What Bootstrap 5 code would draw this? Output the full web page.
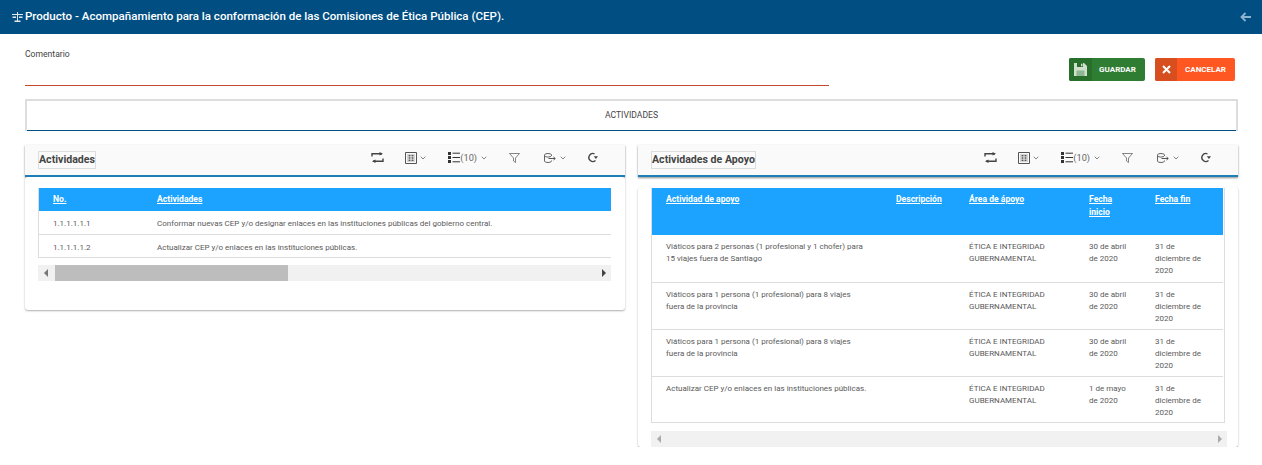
<!DOCTYPE html>
<html lang="en">
<head>
  <meta charset="UTF-8">
  <title>Producto</title>
  <link href="https://cdn.jsdelivr.net/npm/bootstrap@5.3.0/dist/css/bootstrap.min.css" rel="stylesheet">
  <style>
    body { font-family: Roboto, "Liberation Sans", sans-serif; background: #fff; color: #555; overflow: hidden; }
    .top-bar { height: 34px; background: #004e82; padding: 0 11px 0 12px; }
    .top-title { font-size: 11.55px; font-weight: 500; color: #fff; gap: 2px; }
    .page-body { padding: 0 24px 0 25px; }
    .comment-row { height: 65px; }
    .comment-box { width: 804px; height: 52px; border-bottom: 1px solid #c5492d; padding-top: 14px; font-size: 8.6px; line-height: 12px; color: #444; margin-bottom: 13px; }
    .action-btn { height: 23px; border: 0; padding: 0; font-size: 8px; font-weight: 700; color: #fff; border-radius: 2px; overflow: hidden; }
    .action-btn .ico { width: 23px; height: 23px; }
    .btn-save { width: 76px; background: #2e7d32; margin-right: 10px; }
    .btn-save .ico { background: #296f2c; }
    .btn-save .txt { padding-right: 2px; }
    .btn-cancel { width: 80px; background: #ff5722; margin-right: 3px; }
    .btn-cancel .ico { background: #d84f1f; width: 22px; }
    .btn-cancel .txt { padding-right: 1px; }
    .tab-box { height: 32px; border: 2px solid #ddd; border-bottom: 0; box-shadow: inset 0 -1px 0 #004e82; font-size: 8.6px; color: #444; margin-bottom: 14px; padding-bottom: 2px; }
    .panes { gap: 13px; }
    .pane { width: 600px; }
    .pane-head { height: 32px; background: #fafafa; border: 0; border-bottom: 2px solid #1f7fb8; border-radius: 0; box-shadow: 0 1px 2px rgba(0,0,0,.45); padding: 0 27px 0 13px; }
    .pane-title { border: 1px solid #ddd; font-size: 10.6px; font-weight: 700; color: #444; line-height: 16px; padding: 0; height: 18px; }
    .tools { color: #666; font-size: 9.2px; margin-top: -4px; }
    .tools .gap-s { margin-right: 21px; }
    .tools .gap-r { margin-right: 22px; }
    .tools .gap-f { margin-right: 24px; }
    .pane-body { border: 0; border-radius: 3px; box-shadow: 0 1px 2px rgba(0,0,0,.32); }
    .left-body { height: 133px; padding: 11px 14px 0 13px; }
    .right-body { margin-top: 10px; height: 260px; padding: 1px 13px 0 13px; }
    .tbl-wrap { overflow: hidden; border: 1px solid #ddd; border-top: 0; border-right: 0; }
    .left-wrap { height: 70px; }
    .right-wrap { height: 236px; border-right: 1px solid #ddd; }
    .grid-tbl { table-layout: fixed; margin: 0; font-size: 8px; line-height: 12px; color: #5a5a5a; }
    .grid-tbl th { background: #1ca3ff; color: #fff; font-size: 8.6px; font-weight: 700; text-decoration: underline; padding: 5px 8px 0 14px; line-height: 13px; border: 0; vertical-align: top; }
    .grid-tbl td { padding: 6px 8px 0 14px; border-bottom: 1px solid #ddd; vertical-align: top; color: #5a5a5a; }
    .left-wrap .grid-tbl { width: 573px; }
    .left-wrap tr { height: 23px; }
    .left-wrap td { padding-top: 7px; }
    .right-wrap .grid-tbl { width: 571px; }
    .right-wrap tr { height: 47px; }
    .right-wrap td:first-child, .right-wrap th:first-child { padding-right: 15px; }
    .fake-scroll { height: 16px; background: #f1f1f1; }
    .left-scroll { margin-top: 7px; }
    .right-scroll { margin-top: 8px; margin-right: -2px; }
    .thumb { width: 233px; height: 16px; background: #bdbdbd; margin: 0 auto 0 7px; }
    .arr-l { width: 0; height: 0; border: 4px solid transparent; border-left: 0; border-right: 4px solid #777; margin-left: 6px; }
    .arr-r { width: 0; height: 0; border: 4px solid transparent; border-right: 0; border-left: 4px solid #444; margin-right: 5px; }
    .arr-l.dim { border-right-color: #aaa; }
    .arr-r.dim { border-left-color: #aaa; margin-left: auto; }
    .chev { margin-left: 4px; }
    .chev-near { margin-left: 3px; }
  </style>
</head>
<body>
  <svg width="0" height="0" class="d-block position-absolute">
    <defs>
      <symbol id="i-swap" viewBox="0 0 13 11"><path d="M1 4.500V1.800h10M12 6.500v2.700H2" fill="none" stroke="#444" stroke-width="1.400"/><path d="M8.500 0 12 1.800 8.500 3.600zM4.500 7.400 1 9.200 4.500 11z" fill="#444"/></symbol>
      <symbol id="i-cols" viewBox="0 0 12 12"><path d="M.5.500h11v11H.5z" fill="none" stroke="#555"/><path d="M2.500 2.500h7v7h-7z" fill="none" stroke="#bbb" stroke-width=".6"/><path d="M3.500 3h2v1.500h-2zM3.500 5.300h2v1.500h-2zM3.500 7.600h2v1.500h-2zM6.500 3h2v1.500h-2zM6.500 5.300h2v1.500h-2zM6.500 7.600h2v1.500h-2z" fill="#555"/></symbol>
      <symbol id="i-list" viewBox="0 0 12 11"><path d="M0 0h3v3H0zM0 4h3v3H0zM0 8h3v3H0z" fill="#333"/><path d="M4.500 1.200h7.500M4.500 5.500h7.500M4.500 9.800h7.500" stroke="#333" fill="none"/></symbol>
      <symbol id="i-filter" viewBox="0 0 11 10"><path d="M.5.500h10L6.500 5v4.500l-2-1.500V5z" fill="none" stroke="#666" stroke-width=".8"/></symbol>
      <symbol id="i-export" viewBox="0 0 12 10"><path d="M7.500 3V2Q7.500.5 4 .5T.5 2v6q0 1.500 3.500 1.500T7.500 8V7.500M.5 3.500q3.500 1.200 6.500 0" fill="none" stroke="#555" stroke-width=".9"/><path d="M4.500 5.500h6.500M9.500 4l1.800 1.500L9.500 7" fill="none" stroke="#444" stroke-width=".9"/></symbol>
      <symbol id="i-reload" viewBox="0 0 11 11"><path d="M7.500 1.800A4 4 0 1 0 8.500 8.500" fill="none" stroke="#444" stroke-width="1.400"/><path d="M6.800 4.300H11L8.900 7z" fill="#444"/></symbol>
      <symbol id="i-chev" viewBox="0 0 6 4"><path d="M.7.700 3 3l2.300-2.300" fill="none" stroke="#777" stroke-width=".9"/></symbol>
    </defs>
  </svg>

  <nav class="navbar top-bar d-flex align-items-center justify-content-between flex-nowrap">
    <div class="d-flex align-items-center top-title">
      <svg width="11" height="10" viewBox="0 0 11 10"><path d="M5 0h1v9H5zM0 2h11v1H0zM.5 4.500h3.500V6H.5zM7 4.500h3.500V6H7zM2.500 8.500h6V10h-6z" fill="#dfe8ef"/></svg>
      <span>Producto - Acompañamiento para la conformación de las Comisiones de Ética Pública (CEP).</span>
    </div>
    <svg width="11" height="10" viewBox="0 0 11 10"><path d="M11 5H2M5.500 1 1.500 5l4 4" fill="none" stroke="#8fb4d0" stroke-width="1.800"/></svg>
  </nav>

  <div class="page-body">
    <div class="d-flex justify-content-between comment-row">
      <div class="comment-box">Comentario</div>
      <div class="d-flex align-items-start mt-4">
        <button type="button" class="btn action-btn btn-save d-flex align-items-center">
          <span class="ico d-flex align-items-center justify-content-center"><svg width="13" height="13" viewBox="0 0 13 13"><path d="M0 0h10l3 3v10H0z" fill="#cfe0cf"/><path d="M3 0h6v4H3z" fill="#296f2c"/><path d="M7 .8h1.500v2.400H7z" fill="#cfe0cf"/><path d="M2.500 7.500h8V13h-8z" fill="#8fb791"/></svg></span>
          <span class="txt flex-fill text-center">GUARDAR</span>
        </button>
        <button type="button" class="btn action-btn btn-cancel d-flex align-items-center">
          <span class="ico d-flex align-items-center justify-content-center"><svg width="9" height="9" viewBox="0 0 9 9"><path d="M1 1l7 7M8 1 1 8" stroke="#fff" stroke-width="2" fill="none"/></svg></span>
          <span class="txt flex-fill text-center">CANCELAR</span>
        </button>
      </div>
    </div>

    <div class="tab-box d-flex align-items-center justify-content-center">ACTIVIDADES</div>

    <div class="d-flex panes">
      <div class="pane">
        <div class="card pane-head flex-row align-items-center justify-content-between">
          <span class="pane-title">Actividades</span>
          <div class="tools d-flex align-items-center">
            <svg width="13" height="11" class="gap-s"><use href="#i-swap"/></svg>
            <svg width="12" height="12"><use href="#i-cols"/></svg><svg width="6" height="4" class="chev-near gap-r"><use href="#i-chev"/></svg>
            <svg width="12" height="11"><use href="#i-list"/></svg><span class="ms-0">(10)</span><svg width="6" height="4" class="chev gap-r"><use href="#i-chev"/></svg>
            <svg width="11" height="10" class="gap-f"><use href="#i-filter"/></svg>
            <svg width="12" height="10"><use href="#i-export"/></svg><svg width="6" height="4" class="chev gap-s"><use href="#i-chev"/></svg>
            <svg width="11" height="11"><use href="#i-reload"/></svg>
          </div>
        </div>
        <div class="card pane-body left-body">
          <div class="tbl-wrap left-wrap">
            <table class="table grid-tbl">
              <colgroup><col width="104"><col></colgroup>
              <thead><tr><th>No.</th><th>Actividades</th></tr></thead>
              <tbody>
                <tr><td>1.1.1.1.1.1</td><td>Conformar nuevas CEP y/o designar enlaces en las instituciones públicas del gobierno central.</td></tr>
                <tr><td>1.1.1.1.1.2</td><td>Actualizar CEP y/o enlaces en las instituciones públicas.</td></tr>
              </tbody>
            </table>
          </div>
          <div class="fake-scroll left-scroll d-flex align-items-center">
            <span class="arr-l"></span><span class="thumb"></span><span class="arr-r"></span>
          </div>
        </div>
      </div>

      <div class="pane">
        <div class="card pane-head flex-row align-items-center justify-content-between">
          <span class="pane-title">Actividades de Apoyo</span>
          <div class="tools d-flex align-items-center">
            <svg width="13" height="11" class="gap-s"><use href="#i-swap"/></svg>
            <svg width="12" height="12"><use href="#i-cols"/></svg><svg width="6" height="4" class="chev-near gap-r"><use href="#i-chev"/></svg>
            <svg width="12" height="11"><use href="#i-list"/></svg><span class="ms-0">(10)</span><svg width="6" height="4" class="chev gap-r"><use href="#i-chev"/></svg>
            <svg width="11" height="10" class="gap-f"><use href="#i-filter"/></svg>
            <svg width="12" height="10"><use href="#i-export"/></svg><svg width="6" height="4" class="chev gap-s"><use href="#i-chev"/></svg>
            <svg width="11" height="11"><use href="#i-reload"/></svg>
          </div>
        </div>
        <div class="card pane-body right-body">
          <div class="tbl-wrap right-wrap">
            <table class="table grid-tbl">
              <colgroup><col width="230"><col width="73"><col width="120"><col width="66"><col width="82"></colgroup>
              <thead><tr><th>Actividad de apoyo</th><th>Descripción</th><th>Área de ápoyo</th><th>Fecha inicio</th><th>Fecha fin</th></tr></thead>
              <tbody>
                <tr><td>Viáticos para 2 personas (1 profesional y 1 chofer) para 15 viajes fuera de Santiago</td><td></td><td>ÉTICA E INTEGRIDAD GUBERNAMENTAL</td><td>30 de abril de 2020</td><td>31 de<br>diciembre de 2020</td></tr>
                <tr><td>Viáticos para 1 persona (1 profesional) para 8 viajes fuera de la provincia</td><td></td><td>ÉTICA E INTEGRIDAD GUBERNAMENTAL</td><td>30 de abril de 2020</td><td>31 de<br>diciembre de 2020</td></tr>
                <tr><td>Viáticos para 1 persona (1 profesional) para 8 viajes fuera de la provincia</td><td></td><td>ÉTICA E INTEGRIDAD GUBERNAMENTAL</td><td>30 de abril de 2020</td><td>31 de<br>diciembre de 2020</td></tr>
                <tr><td>Actualizar CEP y/o enlaces en las instituciones públicas.</td><td></td><td>ÉTICA E INTEGRIDAD GUBERNAMENTAL</td><td>1 de mayo de 2020</td><td>31 de<br>diciembre de 2020</td></tr>
              </tbody>
            </table>
          </div>
          <div class="fake-scroll right-scroll d-flex align-items-center">
            <span class="arr-l dim"></span><span class="arr-r dim"></span>
          </div>
        </div>
      </div>
    </div>
  </div>
  <script src="https://cdn.jsdelivr.net/npm/bootstrap@5.3.0/dist/js/bootstrap.bundle.min.js"></script>
</body>
</html>
